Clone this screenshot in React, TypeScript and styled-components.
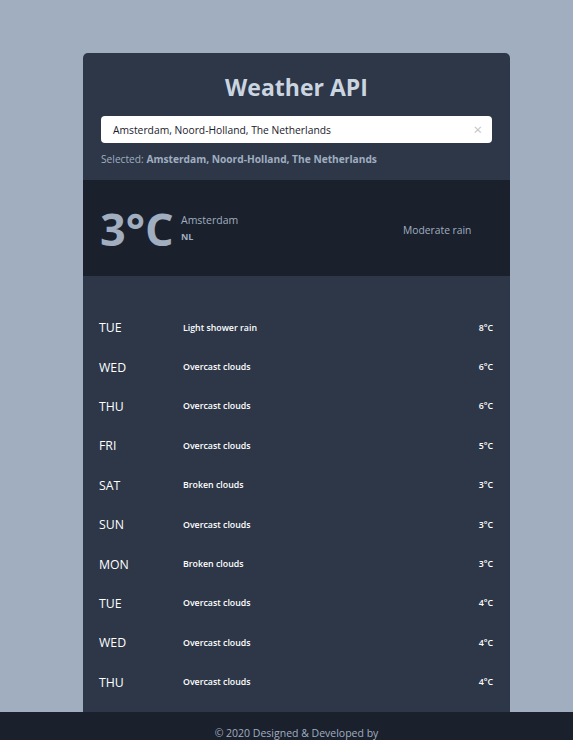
import React from "react";
import styled, { createGlobalStyle } from "styled-components";

const Global = createGlobalStyle`
  html, body { margin: 0; padding: 0; overflow-x: hidden; }
  body {
    background: #a0aec0;
    font-family: "Open Sans", "Noto Sans", sans-serif;
  }
`;

const Page = styled.div`
  width: 593px;
  padding-top: 53px;
`;

const Card = styled.main`
  width: 427px;
  margin: 0 auto;
  background: #2d3748;
  border-radius: 5px 5px 0 0;
  overflow: hidden;
`;

const Header = styled.header`
  padding: 19px 18px 14px 18px;
`;

const Title = styled.h1`
  margin: 0 0 14px 0;
  text-align: center;
  font-size: 23px;
  font-weight: 700;
  color: #cbd5e0;
  line-height: 30px;
`;

const SearchBox = styled.div`
  display: flex;
  align-items: center;
  height: 27px;
  background: #ffffff;
  border-radius: 4px;
  padding: 0 10px 0 12px;
`;

const SearchText = styled.span`
  flex: 1;
  font-size: 10.3px;
  color: #1a202c;
`;

const Clear = styled.span`
  color: #c4c4c4;
  font-size: 15px;
  line-height: 1;
`;

const Selected = styled.p`
  margin: 9px 0 0 0;
  font-size: 10.2px;
  color: #a0aec0;
  & b { font-weight: 700; }
`;

const Current = styled.section`
  display: flex;
  align-items: center;
  height: 96px;
  background: #1a202c;
  padding: 0 17px;
`;

const Temp = styled.div`
  font-size: 45px;
  font-weight: 700;
  color: #a0aec0;
  line-height: 1;
  width: 81px;
`;

const Place = styled.div`
  display: flex;
  flex-direction: column;
  gap: 3px;
  flex: 1;
  color: #a0aec0;
`;

const City = styled.span`
  font-size: 10.5px;
`;

const Country = styled.span`
  font-size: 9px;
  font-weight: 700;
`;

const Condition = styled.span`
  font-size: 10.3px;
  color: #a0aec0;
  width: 90px;
  margin-top: 3px;
`;

const Forecast = styled.section`
  padding: 32px 17px 10px 16px;
`;

const Row = styled.div`
  display: grid;
  grid-template-columns: 84px 1fr auto;
  align-items: center;
  height: 39.4px;
  color: #ffffff;
`;

const Day = styled.span`
  font-size: 12.3px;
`;

const Desc = styled.span`
  font-size: 8.8px;
  font-weight: 600;
`;

const DayTemp = styled.span`
  font-size: 8.8px;
  font-weight: 600;
  text-align: right;
`;

const Footer = styled.footer`
  background: #1a202c;
  padding: 14px 0 30px;
  text-align: center;
  font-size: 10.5px;
  line-height: 14px;
  color: #a0aec0;
`;

const days = [
  ["TUE", "Light shower rain", "8"],
  ["WED", "Overcast clouds", "6"],
  ["THU", "Overcast clouds", "6"],
  ["FRI", "Overcast clouds", "5"],
  ["SAT", "Broken clouds", "3"],
  ["SUN", "Overcast clouds", "3"],
  ["MON", "Broken clouds", "3"],
  ["TUE", "Overcast clouds", "4"],
  ["WED", "Overcast clouds", "4"],
  ["THU", "Overcast clouds", "4"],
];

export default function App() {
  return (
    <>
      <Global />
      <Page>
        <Card>
          <Header>
            <Title>Weather API</Title>
            <SearchBox>
              <SearchText>Amsterdam, Noord-Holland, The Netherlands</SearchText>
              <Clear>×</Clear>
            </SearchBox>
            <Selected>
              Selected: <b>Amsterdam, Noord-Holland, The Netherlands</b>
            </Selected>
          </Header>
          <Current>
            <Temp>3°C</Temp>
            <Place>
              <City>Amsterdam</City>
              <Country>NL</Country>
            </Place>
            <Condition>Moderate rain</Condition>
          </Current>
          <Forecast>
            {days.map(([d, desc, t], i) => (
              <Row key={i}>
                <Day>{d}</Day>
                <Desc>{desc}</Desc>
                <DayTemp>{t}°C</DayTemp>
              </Row>
            ))}
          </Forecast>
        </Card>
        <Footer>© 2020 Designed &amp; Developed by</Footer>
      </Page>
    </>
  );
}
